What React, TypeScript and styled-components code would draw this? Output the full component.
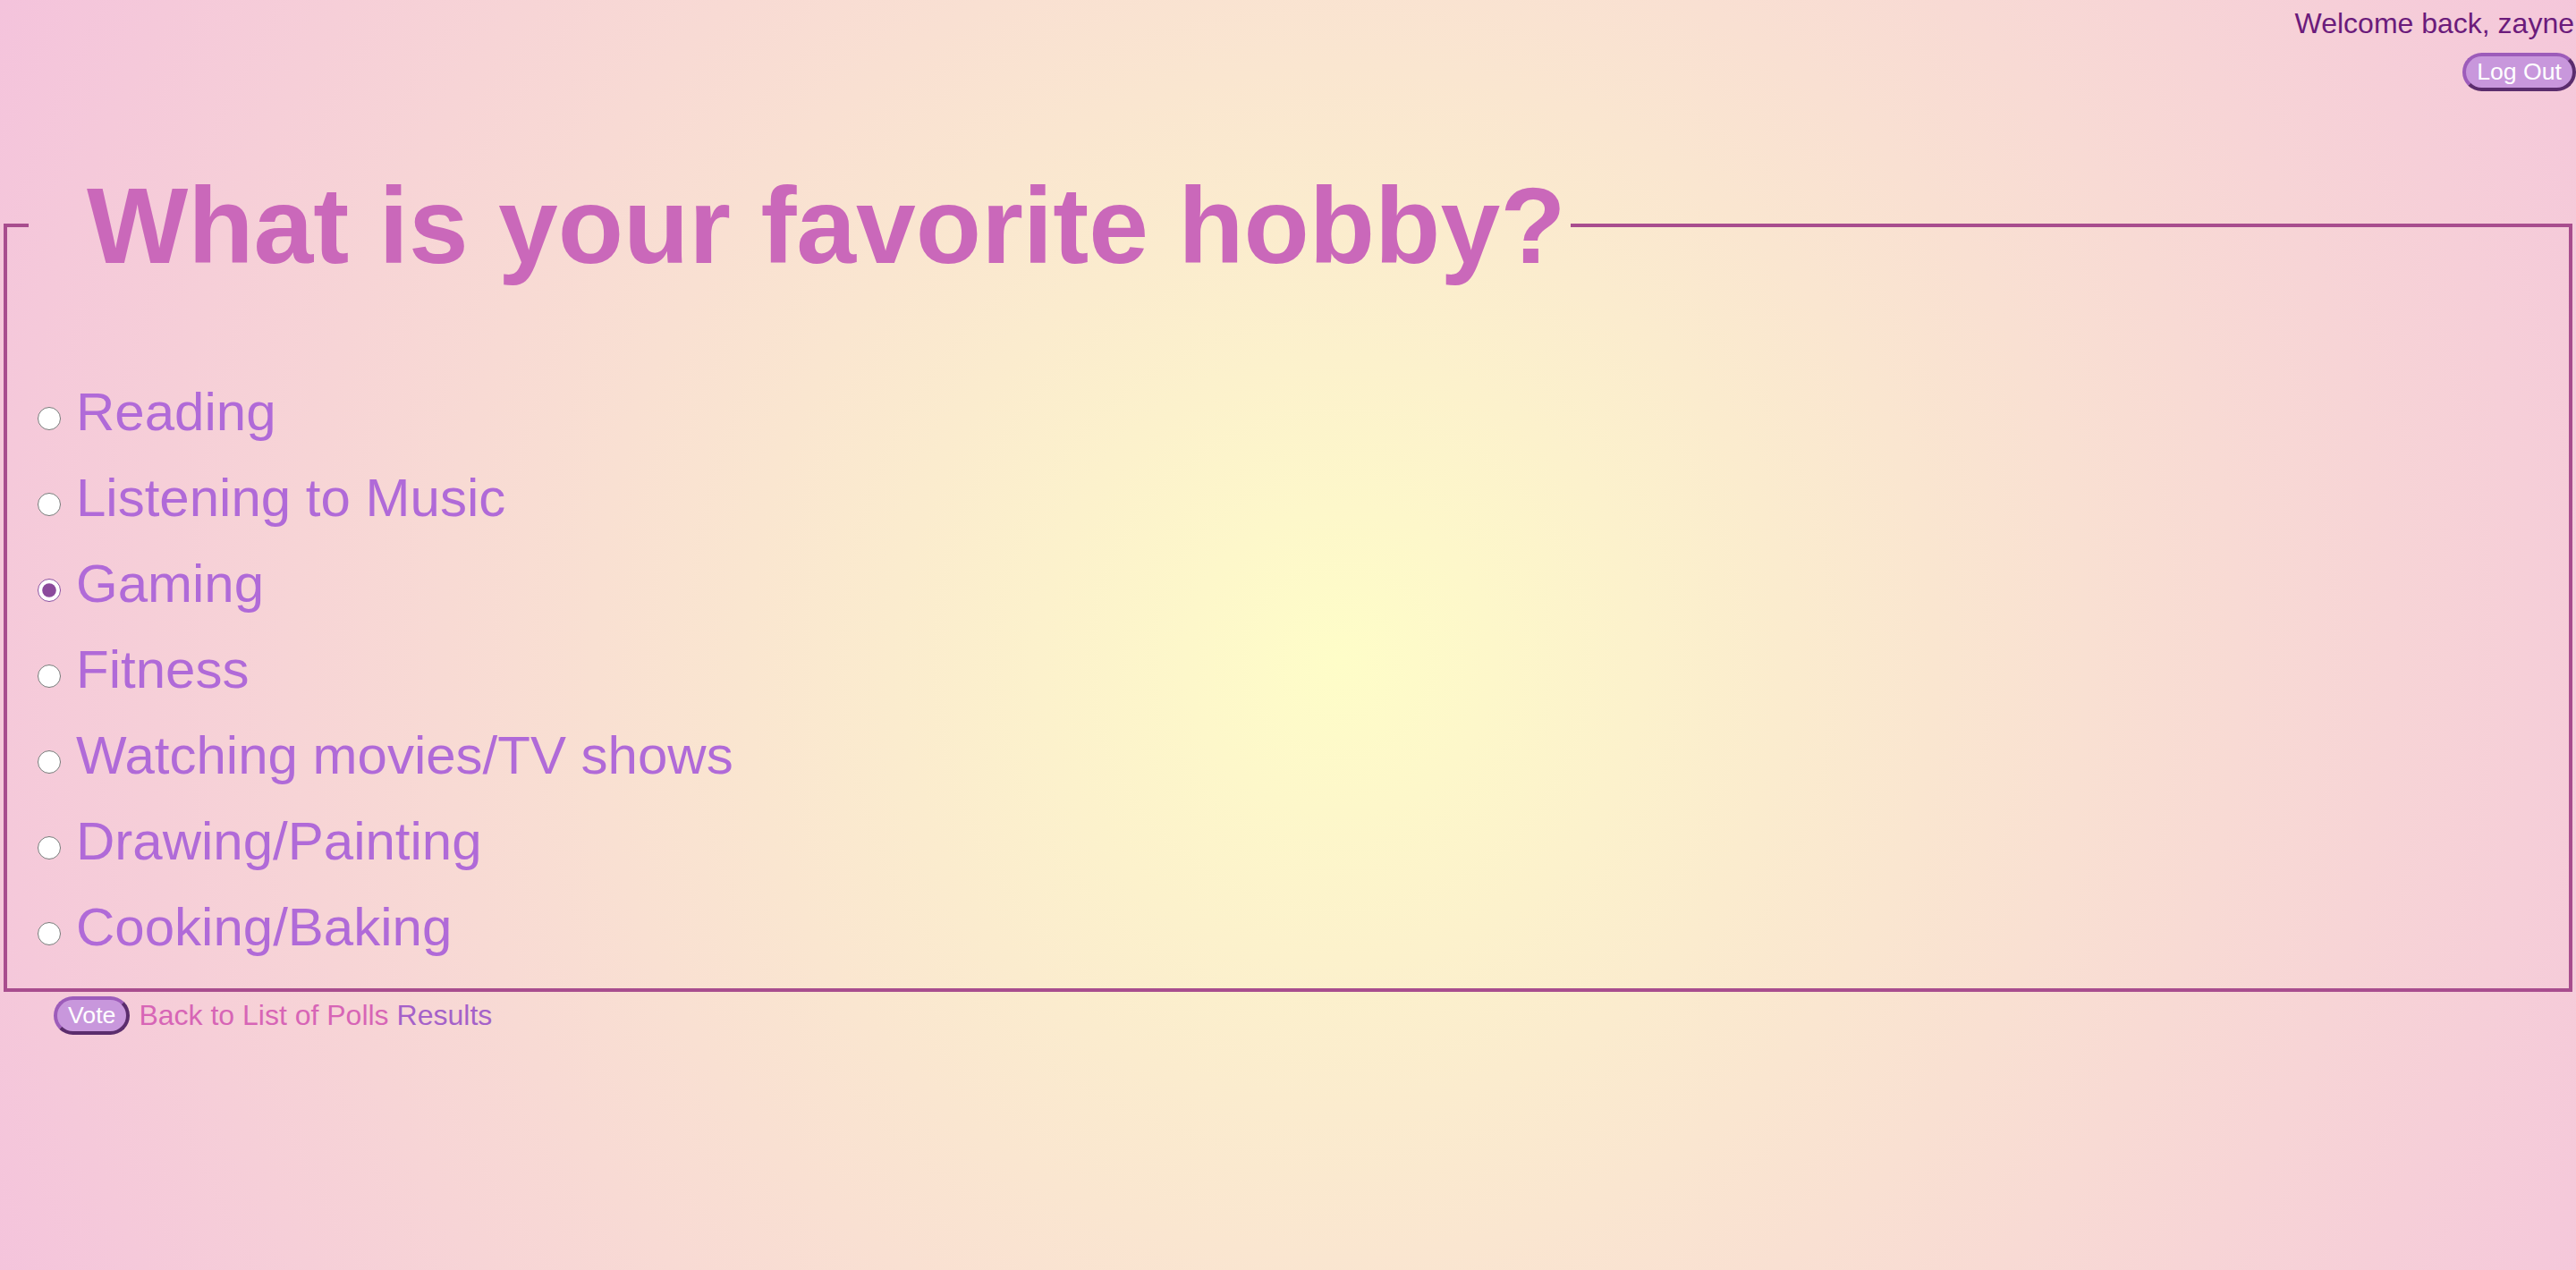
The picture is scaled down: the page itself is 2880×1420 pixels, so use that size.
import { createGlobalStyle } from 'styled-components';
import styled from 'styled-components';

const GlobalStyle = createGlobalStyle`
  html, body {
    margin: 0;
    padding: 0;
  }
  body {
    min-height: 100vh;
    background: radial-gradient(circle at 52% 52%, #fefdc8 0%, #f4c3dc 100%);
    font-family: "Liberation Sans", Helvetica, Arial, sans-serif;
  }
`;

const Page = styled.div`
  display: flex;
  flex-direction: column;
`;

const UserBar = styled.div`
  display: flex;
  flex-direction: column;
  align-items: flex-end;
  padding-top: 8px;
`;

const Welcome = styled.div`
  font-size: 32px;
  color: #6b1b7b;
  margin-right: 2px;
`;

const PillButton = styled.button`
  font-family: "Liberation Sans", Helvetica, Arial, sans-serif;
  font-size: 26.67px;
  color: #ffffff;
  background: #c897dc;
  padding: 2px 12px;
  border: 4px solid;
  border-color: #9d5cba #5b2d6d #5b2d6d #9d5cba;
  border-radius: 24px;
  cursor: pointer;
`;

const LogOut = styled(PillButton)`
  margin-top: 14px;
`;

const Poll = styled.fieldset`
  margin: 81px 4px 0;
  padding: 0 0 20px 24px;
  border: 4px solid #a84d8e;
  min-width: 0;
`;

const Question = styled.legend`
  margin: 0;
  padding: 0 6px 0 65px;
  font-size: 120px;
  font-weight: 700;
  color: #ca68ba;
`;

const Options = styled.div`
  display: flex;
  flex-direction: column;
  margin-top: 92px;
  padding-left: 10px;
`;

const Option = styled.label`
  display: block;
  height: 96px;
  line-height: 96px;
  font-size: 60px;
  color: #b06ad8;
  cursor: pointer;
`;

const Radio = styled.input`
  width: 26px;
  height: 26px;
  margin: 0 17px 0 0;
  vertical-align: baseline;
  accent-color: #8b4a9c;
`;

const Actions = styled.div`
  display: flex;
  align-items: center;
  gap: 10px;
  margin: 5px 0 0 60px;
  font-size: 32px;
`;

const Links = styled.div`
  display: flex;
  gap: 9px;
`;

const NavLink = styled.a<{ $tone: 'pink' | 'purple' }>`
  color: ${(p) => (p.$tone === 'pink' ? '#d765b6' : '#a561c9')};
  text-decoration: none;
  cursor: pointer;
`;

const hobbies = [
  'Reading',
  'Listening to Music',
  'Gaming',
  'Fitness',
  'Watching movies/TV shows',
  'Drawing/Painting',
  'Cooking/Baking',
];

export default function App() {
  return (
    <Page>
      <GlobalStyle />
      <UserBar>
        <Welcome>Welcome back, zayne</Welcome>
        <LogOut>Log Out</LogOut>
      </UserBar>
      <form onSubmit={(e) => e.preventDefault()}>
        <Poll>
          <Question>What is your favorite hobby?</Question>
          <Options>
            {hobbies.map((h) => (
              <Option key={h}>
                <Radio type="radio" name="choice" value={h} defaultChecked={h === 'Gaming'} />
                {h}
              </Option>
            ))}
          </Options>
        </Poll>
        <Actions>
          <PillButton type="submit">Vote</PillButton>
          <Links>
            <NavLink $tone="pink">Back to List of Polls</NavLink>
            <NavLink $tone="purple">Results</NavLink>
          </Links>
        </Actions>
      </form>
    </Page>
  );
}
